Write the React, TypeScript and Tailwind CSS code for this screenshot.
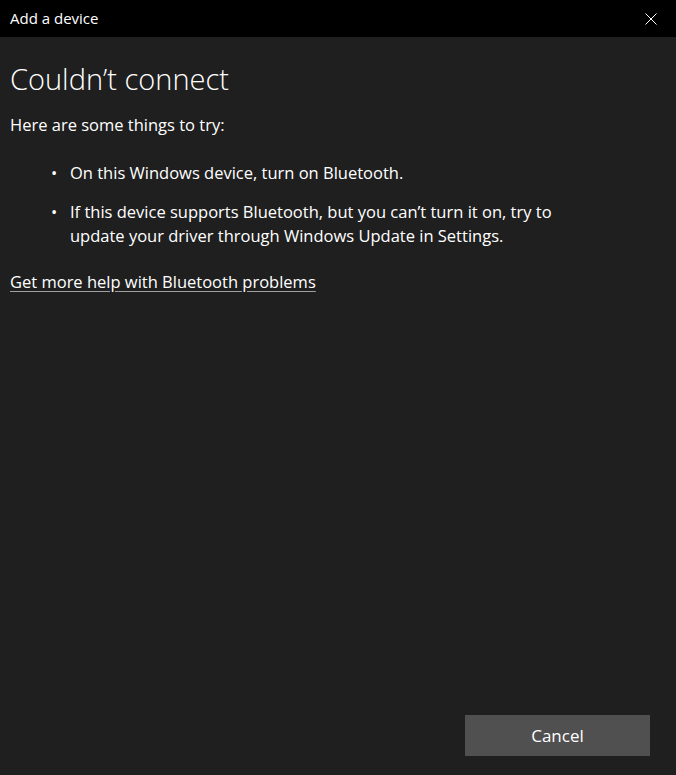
import React from "react";

export default function App() {
  const font = { fontFamily: '"Open Sans", "Noto Sans", sans-serif' };
  return (
    <div className="w-[676px] h-[775px] bg-[#1f1f1f] flex flex-col text-white overflow-hidden" style={font}>
      <div className="h-[37px] bg-black flex items-center justify-between pl-[10px] pr-[19px] shrink-0">
        <span className="text-[15px] text-white -mt-[1px]">Add a device</span>
        <svg width="12" height="12" viewBox="0 0 12 12" className="text-white">
          <path d="M0.5 0.5 L11.5 11.5 M11.5 0.5 L0.5 11.5" stroke="currentColor" strokeWidth="1" />
        </svg>
      </div>
      <div className="flex-1 flex flex-col px-[10px]">
        <h1 className="text-[29px] font-light leading-none mt-[27px]">Couldn’t connect</h1>
        <p className="text-[16.5px] mt-[22px] leading-[20px]">Here are some things to try:</p>
        <ul className="mt-[26px] pl-[41px] flex flex-col gap-[15px] text-[16.5px] leading-[24px]">
          <li className="flex">
            <span className="w-[19px] shrink-0">•</span>
            <span>On this Windows device, turn on Bluetooth.</span>
          </li>
          <li className="flex">
            <span className="w-[19px] shrink-0">•</span>
            <span className="w-[500px]">If this device supports Bluetooth, but you can’t turn it on, try to update your driver through Windows Update in Settings.</span>
          </li>
        </ul>
        <a className="mt-[22px] text-[16.5px] leading-[24px] underline underline-offset-[3px] decoration-[#a0a0a0] self-start">Get more help with Bluetooth problems</a>
        <div className="flex-1" />
        <div className="flex justify-end pr-[16px] pb-[19px]">
          <button className="w-[185px] h-[41px] bg-[#505050] text-[17px] text-white">Cancel</button>
        </div>
      </div>
    </div>
  );
}
